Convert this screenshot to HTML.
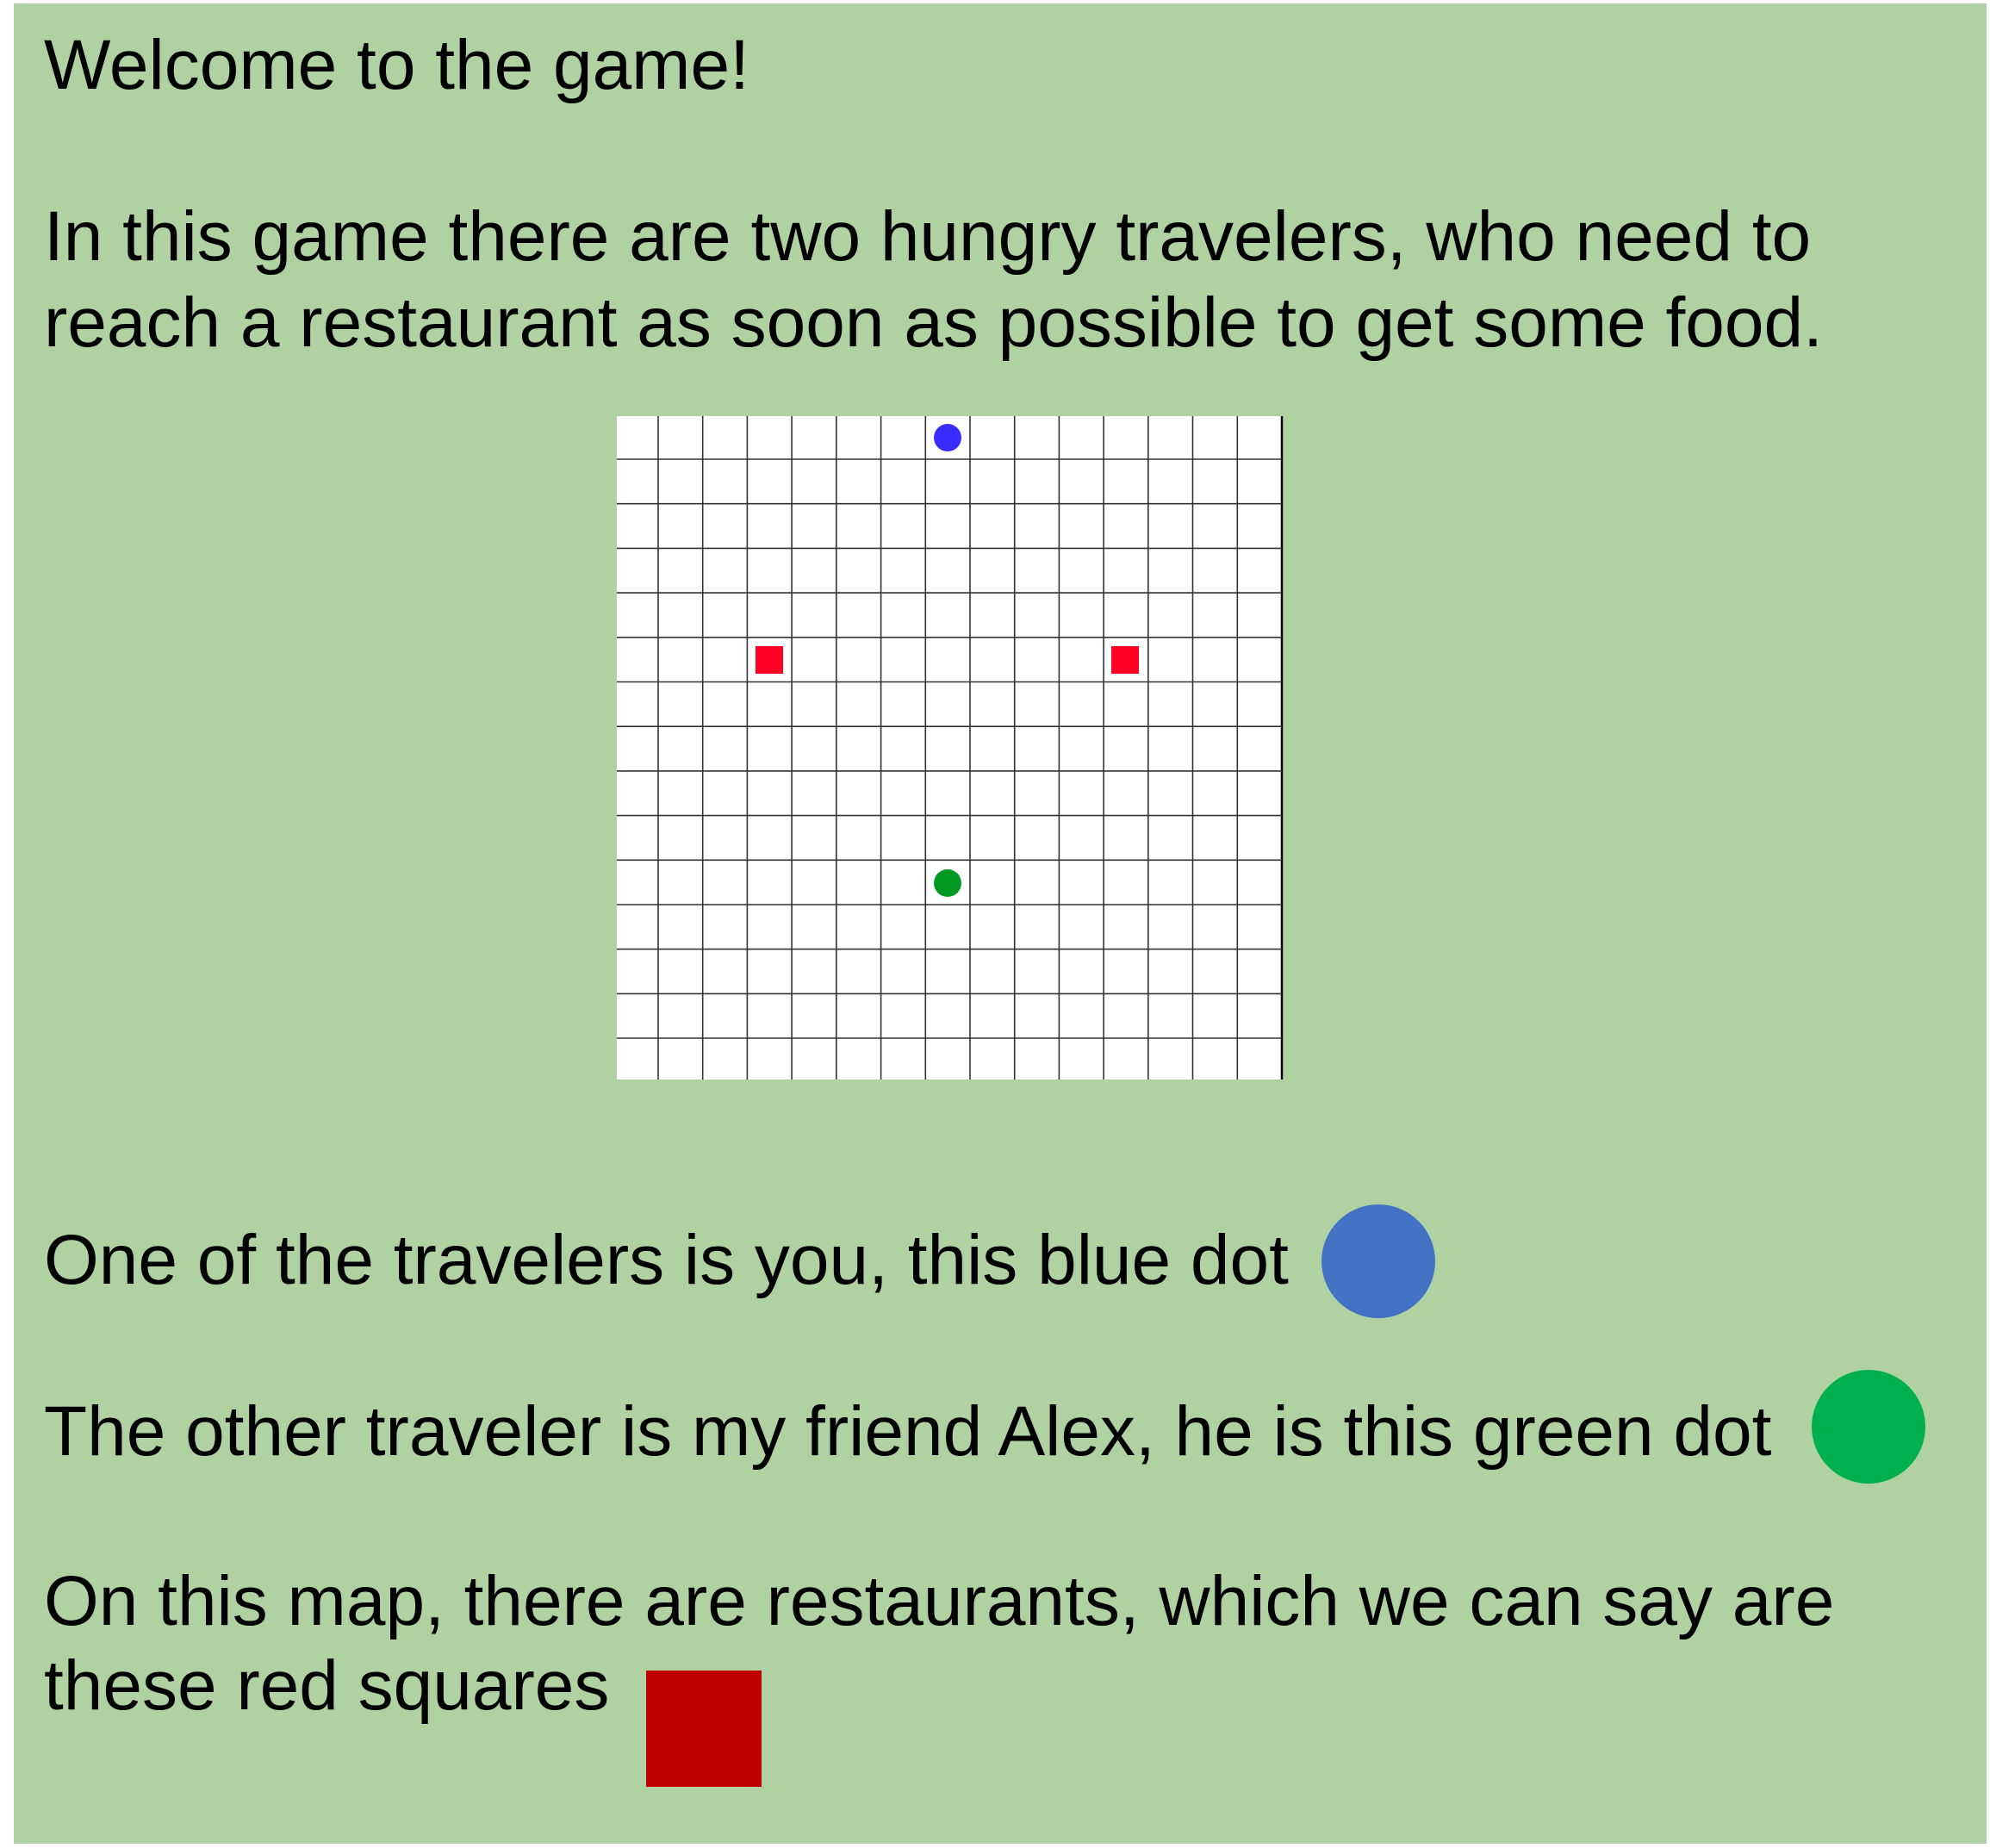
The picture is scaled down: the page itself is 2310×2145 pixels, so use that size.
<!DOCTYPE html>
<html><head><meta charset="utf-8"><style>
html,body{margin:0;padding:0;background:#fff;width:2310px;height:2145px;overflow:hidden;position:relative}
.panel{position:absolute;left:16px;top:4px;width:2290px;height:2136px;background:#b0d2a3}
.t{position:absolute;left:51px;font-family:"Liberation Sans",Arial,sans-serif;font-size:82px;line-height:1;color:#000;white-space:nowrap}
</style></head><body>
<div class="panel"></div>
<div class="t" style="top:35px">Welcome to the game!</div>
<div class="t" style="top:234px">In this game there are two hungry travelers, who need to</div>
<div class="t" style="top:334px">reach a restaurant as soon as possible to get some food.</div>
<svg style="position:absolute;left:0;top:0" width="2310" height="2145">
<rect x="716" y="483" width="772" height="770" fill="#fff"/>
<g stroke="#333" stroke-width="1.6">
<line x1="764" y1="483" x2="764" y2="1253"/><line x1="815.7" y1="483" x2="815.7" y2="1253"/><line x1="867.4" y1="483" x2="867.4" y2="1253"/><line x1="919.1" y1="483" x2="919.1" y2="1253"/><line x1="970.8" y1="483" x2="970.8" y2="1253"/><line x1="1022.6" y1="483" x2="1022.6" y2="1253"/><line x1="1074.3" y1="483" x2="1074.3" y2="1253"/><line x1="1126" y1="483" x2="1126" y2="1253"/><line x1="1177.7" y1="483" x2="1177.7" y2="1253"/><line x1="1229.4" y1="483" x2="1229.4" y2="1253"/><line x1="1281.1" y1="483" x2="1281.1" y2="1253"/><line x1="1332.8" y1="483" x2="1332.8" y2="1253"/><line x1="1384.5" y1="483" x2="1384.5" y2="1253"/><line x1="1436.3" y1="483" x2="1436.3" y2="1253"/><line x1="1488" y1="483" x2="1488" y2="1253" stroke="#000" stroke-width="2.5"/>
<line x1="716" y1="533" x2="1488" y2="533"/><line x1="716" y1="584.7" x2="1488" y2="584.7"/><line x1="716" y1="636.4" x2="1488" y2="636.4"/><line x1="716" y1="688.1" x2="1488" y2="688.1"/><line x1="716" y1="739.8" x2="1488" y2="739.8"/><line x1="716" y1="791.5" x2="1488" y2="791.5"/><line x1="716" y1="843.2" x2="1488" y2="843.2"/><line x1="716" y1="894.9" x2="1488" y2="894.9"/><line x1="716" y1="946.6" x2="1488" y2="946.6"/><line x1="716" y1="998.3" x2="1488" y2="998.3"/><line x1="716" y1="1050" x2="1488" y2="1050"/><line x1="716" y1="1101.7" x2="1488" y2="1101.7"/><line x1="716" y1="1153.4" x2="1488" y2="1153.4"/><line x1="716" y1="1205" x2="1488" y2="1205"/>
</g>
<circle cx="1100" cy="508" r="16" fill="#3a2cff"/>
<circle cx="1100" cy="1025" r="16" fill="#009a22"/>
<rect x="877" y="750" width="32" height="32" fill="#ff0022"/>
<rect x="1290" y="750" width="32" height="32" fill="#ff0022"/>
<ellipse cx="1600" cy="1464" rx="66" ry="66" fill="#4472c4"/>
<ellipse cx="2169" cy="1656" rx="66" ry="66" fill="#00b050"/>
<rect x="750" y="1939" width="134" height="135" fill="#c00000"/>
</svg>
<div class="t" style="top:1422px">One of the travelers is you, this blue dot</div>
<div class="t" style="top:1621px">The other traveler is my friend Alex, he is this green dot</div>
<div class="t" style="top:1818px">On this map, there are restaurants, which we can say are</div>
<div class="t" style="top:1916px">these red squares</div>
</body></html>
